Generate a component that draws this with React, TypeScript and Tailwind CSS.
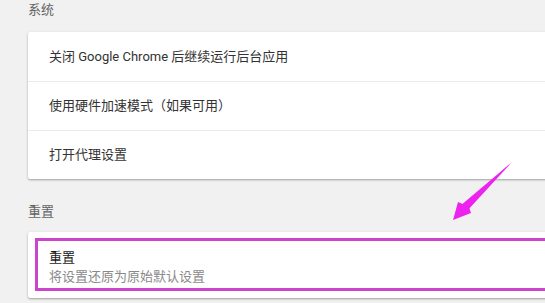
import React from "react";

const rows = ["关闭 Google Chrome 后继续运行后台应用", "使用硬件加速模式（如果可用）", "打开代理设置"];

export default function App() {
  return (
    <div
      className="relative w-[545px] h-[303px] overflow-hidden bg-[#f1f1f1] text-[13px]"
      style={{ fontFamily: "Roboto, 'Noto Sans CJK SC', sans-serif" }}
    >
      <div className="pl-[28px]">
        {/* 系统 */}
        <div className="h-[32px] pt-[1px] text-[#646464] leading-[18px]">系统</div>
        <div className="w-[560px] bg-white rounded-[2px] shadow-[0_1px_2px_rgba(0,0,0,0.25),0_1px_3px_rgba(0,0,0,0.1)]">
          {rows.map((r, i) => (
            <div
              key={r}
              className={`h-[49px] flex items-center pl-[21px] text-[#333] ${
                i > 0 ? "border-t border-[#ebebeb]" : ""
              }`}
            >
              {r}
            </div>
          ))}
        </div>

        {/* 重置 */}
        <div className="h-[53px] pt-[24px] text-[#646464] leading-[18px]">重置</div>
        <div className="w-[560px] h-[66px] bg-white rounded-[2px] shadow-[0_1px_2px_rgba(0,0,0,0.25),0_1px_3px_rgba(0,0,0,0.1)] pt-[6px] pl-[7px]">
          <div className="h-[53px] border-[3px] border-[#cc44cc] pl-[11px] pt-[7px] leading-[19px]">
            <div className="text-[#1a1a1a]">重置</div>
            <div className="text-[#8a8a8a]">将设置还原为原始默认设置</div>
          </div>
        </div>
      </div>

      {/* annotation arrow */}
      <svg className="absolute left-0 top-0" width="545" height="303" viewBox="0 0 545 303">
        <path
          d="M512 162 L468 204 L471 213 L453 220 L458 202 L465 205 Z"
          fill="#ee22ee"
        />
        <path d="M512 162 L460 206 L467 211 Z" fill="#ee22ee" />
      </svg>
    </div>
  );
}
